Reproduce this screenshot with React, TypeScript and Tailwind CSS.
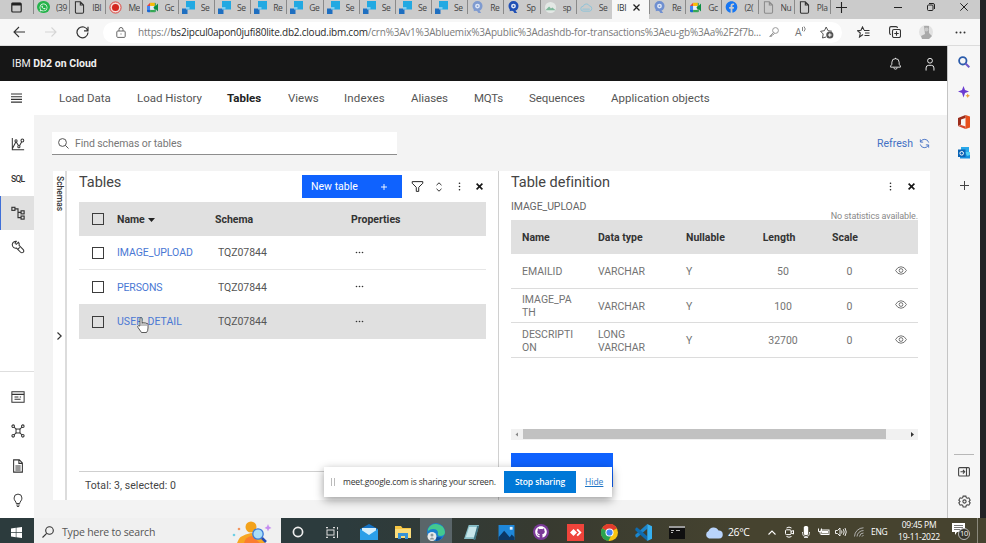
import React from "react";
import type { ReactNode } from "react";
import { FaFacebook, FaGithub, FaWhatsapp } from "react-icons/fa";

type P = { className?: string; children?: ReactNode; box?: string; w?: number };

const Ico = ({ className = "", children, box = "0 0 32 32", w = 2 }: P) => (
  <svg viewBox={box} className={"shrink-0 " + className} fill="none" stroke="currentColor" strokeWidth={w}>
    {children}
  </svg>
);

/* ---------- favicons ---------- */
const Doc = ({ faded }: { faded?: boolean }) => (
  <Ico className={faded ? "h-[13px] w-[13px] text-[#8c8c8c]" : "h-[13px] w-[13px] text-[#333]"} box="0 0 16 16" w={1.3}>
    <path d="M3 1h6l4 4v8.500a1.500 1.500 0 0 1-1.500 1.500h-7A1.500 1.500 0 0 1 3 13.500zM9 1v4h4" />
  </Ico>
);
const Meet = () => (
  <svg viewBox="0 0 16 14" className="h-[11px] w-[13px] shrink-0">
    <path d="M1 5l4-4v4z" fill="#ea4335" />
    <path d="M5 1h6v4H5z" fill="#fbbc04" />
    <path d="M1 5h4v5H1z" fill="#4285f4" />
    <path d="M1 10h4v3H2.500Q1 13 1 11.500z" fill="#1967d2" />
    <path d="M5 10h6v3H5z" fill="#34a853" />
    <path d="M11 1q1 0 1 1v10q0 1-1 1V9.500L9 7l2-2zM12 5l3-3v10l-3-3z" fill="#0a8f43" />
    <path d="M5 5h5l-1 2 1 3H5z" fill="#e8eefb" />
  </svg>
);
const Squares = () => (
  <svg viewBox="0 0 13 13" className="mt-px h-[13px] w-[13px] shrink-0">
    <path d="M4 0h9v8.500H4z" fill="#22a9e2" />
    <path d="M0 7.500h5.500V13H0z" fill="#1f6fc0" />
    <path d="M4 6h3.500v2.500H4z" fill="#7fcdf0" />
  </svg>
);
const Rec = () => (
  <svg viewBox="0 0 14 14" className="h-[13px] w-[13px] shrink-0">
    <circle cx="7" cy="7" r="6" fill="#f4dcda" stroke="#d93a33" />
    <circle cx="7" cy="7" r="3.800" fill="#d3261f" />
  </svg>
);
const Quest = ({ c }: { c: string }) => (
  <svg viewBox="0 0 14 14" className="h-[13px] w-[13px] shrink-0">
    <circle cx="7" cy="5.500" r="4" fill="#dfe7f5" stroke={c} strokeWidth="2.800" />
    <path d="M3 9l5 0 3 4H8l-2-3-3 1z" fill={c} />
    <circle cx="7" cy="5.500" r="1" fill={c} />
  </svg>
);
const Mount = () => (
  <svg viewBox="0 0 14 14" className="h-[13px] w-[13px] shrink-0">
    <circle cx="7" cy="7" r="6" fill="#e3e8e5" />
    <path d="M1.500 10l4-4 2 2 1.500-1 3.500 3z" fill="#7fb99c" />
  </svg>
);
const CloudIc = () => (
  <Ico className="h-[13px] w-[13px] text-[#8fc3d8]" box="0 0 16 16" w={1.2}>
    <path d="M4 12.500a3 3 0 0 1 0-6 4 4 0 0 1 7.500-.5 3.300 3.300 0 0 1 .5 6.500zM3 10h9" />
  </Ico>
);
const Wa = () => (
  <span className="flex h-[12px] w-[13px] shrink-0 items-center justify-center rounded-full bg-[#25b34b] text-white">
    <FaWhatsapp className="h-[9px] w-[9px]" />
  </span>
);

type Tab = [ReactNode, string];
const leftTabs: Tab[] = [
  [<Wa />, "(39"],
  [<Doc />, "IBI"],
  [<Rec />, "Me"],
  [<Meet />, "Gc"],
  [<Squares />, "Se"],
  [<Squares />, "Se"],
  [<Squares />, "Re"],
  [<Squares />, "Ge"],
  [<Squares />, "Se"],
  [<Squares />, "Se"],
  [<Squares />, "Se"],
  [<Squares />, "Se"],
  [<Quest c="#7f9bd0" />, "Re"],
  [<Quest c="#1f4fb5" />, "Sp"],
  [<Mount />, "sp"],
  [<CloudIc />, "Se"],
];
const rightTabs: Tab[] = [
  [<Quest c="#6f8fd0" />, "Re"],
  [<Meet />, "Gc"],
  [<FaFacebook className="h-[12px] w-[13px] shrink-0 text-[#1877f2]" />, "(2("],
  [<Doc faded />, "Nu"],
  [<Doc />, "Pla"],
];
const TabItem = ({ t }: { t: Tab }) => (
  <div className="flex h-[14px] w-[36.2px] shrink-0 items-center border-l border-[#8a8a8a] pl-[3px]">
    {t[0]}
    <span className="ml-[6px] w-[12px] overflow-hidden font-['Open_Sans',sans-serif] text-[8.5px] leading-[15px] tracking-[-0.4px] whitespace-nowrap text-[#444]">
      {t[1]}
    </span>
  </div>
);

const TabStrip = () => (
  <div className="flex h-[19px] shrink-0 items-start bg-[#cbcbcb]">
    <div className="flex h-[14px] w-[33px] shrink-0 items-center pl-[11px]">
      <Ico className="h-[11px] w-[11px] text-[#222]" box="0 0 11 11" w={1.2}>
        <rect x="0.800" y="1" width="9.400" height="9" rx="1" />
        <path d="M1 2.200h9" strokeWidth="2.600" />
      </Ico>
    </div>
    {leftTabs.map((t, i) => (
      <TabItem key={i} t={t} />
    ))}
    <div className="flex h-[19px] w-[37px] shrink-0 items-start bg-[#f7f7f7] pl-[5px] font-['Open_Sans',sans-serif]">
      <span className="w-[12px] overflow-hidden text-[8.5px] leading-[15px] tracking-[-0.3px] text-[#333]">IBI</span>
      <Ico className="mt-[4px] ml-[4px] h-[7px] w-[7px] text-[#222]" box="0 0 7 7" w={1.3}>
        <path d="M.5.5l6 6M6.500.5l-6 6" />
      </Ico>
    </div>
    {rightTabs.map((t, i) => (
      <TabItem key={i} t={t} />
    ))}
    <div className="flex h-[14px] flex-1 items-center border-l border-[#8a8a8a] text-[#222]">
      <Ico className="ml-[5px] h-[11px] w-[11px]" box="0 0 11 11" w={1.1}>
        <path d="M5.500 0v11M0 5.500h11" />
      </Ico>
      <Ico className="ml-[47px] h-[8px] w-[8px]" box="0 0 8 8" w={1}>
        <path d="M0 4.500h8" />
      </Ico>
      <Ico className="ml-[25px] h-[8px] w-[8px]" box="0 0 8 8" w={1}>
        <rect x=".5" y="2" width="5.500" height="5.500" rx="1" />
        <path d="M2 .5h4a1.500 1.500 0 0 1 1.500 1.500v4" />
      </Ico>
      <Ico className="ml-[25px] h-[8px] w-[8px]" box="0 0 8 8" w={1}>
        <path d="M.3.3l7.400 7.400M7.700.3L.3 7.700" />
      </Ico>
    </div>
  </div>
);

const Toolbar = () => (
  <div className="flex h-[27px] shrink-0 items-center border-b border-[#dcdcdc] bg-[#f7f7f7] text-[#333]">
    <Ico className="ml-[13px] h-[12px] w-[12px]" box="0 0 12 12" w={1.1}>
      <path d="M12 6H1M6 1L1 6l5 5" />
    </Ico>
    <Ico className="ml-[20px] h-[12px] w-[12px] text-[#d5d5d5]" box="0 0 12 12" w={1.1}>
      <path d="M0 6h11M6.500 1.500L11 6l-4.500 4.500" />
    </Ico>
    <Ico className="ml-[19px] h-[13px] w-[13px]" box="0 0 13 13" w={1.2}>
      <path d="M11.700 4.500A5.500 5.500 0 1 0 12 6.500M12 .8v4H8" />
    </Ico>
    <div className="ml-[14px] flex h-[21px] w-[739px] items-center rounded-full bg-white pr-[8px] pl-[13px]">
      <Ico className="h-[11px] w-[10px] text-[#666]" box="0 0 10 11" w={1}>
        <rect x=".8" y="4" width="8.400" height="6.400" rx="1" />
        <path d="M3 4V2.500a2 2 0 0 1 4 0V4M5 6.500v1" />
      </Ico>
      <span className="ml-[12px] w-[626px] shrink-0 pt-[1px] font-['Open_Sans',sans-serif] text-[10px] tracking-[-0.210px] whitespace-nowrap text-[#7a7a7a]">
        https://<span className="text-[#2a2a2a]">bs2ipcul0apon0jufi80lite.db2.cloud.ibm.com</span>
        /crn%3Av1%3Abluemix%3Apublic%3Adashdb-for-transactions%3Aeu-gb%3Aa%2F2f7b...
      </span>
      <Ico className="ml-[5px] h-[10px] w-[10px] text-[#999]" box="0 0 10 10" w={1}>
        <circle cx="6.500" cy="3.500" r="2.900" />
        <path d="M4.500 5.500L.6 9.400h2V8h1.400L5.500 6.300" />
      </Ico>
      <span className="ml-[16px] font-['Open_Sans',sans-serif] text-[10.5px] leading-none text-[#777]">A</span>
      <Ico className="mb-[6px] h-[6px] w-[5px] text-[#777]" box="0 0 5 6" w={0.9}>
        <path d="M.5 1v4M2 .5q2.500 2.500 0 5" />
      </Ico>
      <Ico className="ml-[13px] h-[13px] w-[14px] text-[#555]" box="0 0 14 13" w={1}>
        <path d="M6 11L2.500 12l.7-4L.6 5.300l3.800-.6L6.200 1 8 4.700l3.800.5" />
        <circle cx="9.800" cy="9" r="3.600" fill="#555" stroke="none" />
        <path d="M8 9h3.600M9.800 7.200v3.600" stroke="#fff" />
      </Ico>
    </div>
    <Ico className="ml-[15px] h-[12px] w-[13px]" box="0 0 13 12" w={1.1}>
      <path d="M7 4.500h5.500M8 7h4.500M7.500 9.500h5M6 8.500L2.500 11l.8-4L.6 4.700l3.400-.5L5.500 1 7 4" />
    </Ico>
    <Ico className="ml-[19px] h-[12px] w-[12px]" box="0 0 12 12" w={1.1}>
      <rect x="3.500" y="3.500" width="8" height="8" rx="1.500" />
      <path d="M7.500 5.300v4.400M5.300 7.500h4.400M2 8.500A1.500 1.500 0 0 1 .6 7V2A1.500 1.500 0 0 1 2 .6h5A1.500 1.500 0 0 1 8.500 2" />
    </Ico>
    <svg viewBox="0 0 14 14" className="ml-[18px] h-[14px] w-[14px] shrink-0">
      <circle cx="7" cy="7" r="7" fill="#e2e2e2" />
      <path d="M5 1h5v7l3 3-3 3H3l-1-3 4-2z" fill="#a9a9a9" />
      <circle cx="7.500" cy="4.500" r="2" fill="#c9c9c9" />
    </svg>
    <svg viewBox="0 0 11 3" className="ml-[22px] h-[3px] w-[11px] shrink-0" fill="#333">
      <circle cx="1.500" cy="1.500" r="1" />
      <circle cx="5.500" cy="1.500" r="1" />
      <circle cx="9.500" cy="1.500" r="1" />
    </svg>
  </div>
);

/* ---------- left rail ---------- */
const Rail = () => (
  <div className="flex w-[34px] shrink-0 flex-col bg-white text-[#333]">
    <div className="flex h-[34px] items-center pl-[11px]">
      <Ico className="h-[10px] w-[11px]" box="0 0 11 10" w={1.1}>
        <path d="M0 1h11M0 3.700h11M0 6.400h11M0 9.100h11" />
      </Ico>
    </div>
    <div className="mt-[12px] flex h-[34px] items-center pl-[11px]">
      <Ico className="h-[14px] w-[14px]" w={2.3}>
        <path d="M3 2v27h27M3 27l8-15.500M12 11.500l5 8M19.500 20l5-9" />
        <circle cx="11.500" cy="9" r="2.500" />
        <circle cx="18" cy="22" r="2.500" />
        <circle cx="26" cy="8" r="3.200" />
      </Ico>
    </div>
    <div className="flex h-[35px] items-center pt-[1px] pl-[11px] font-['Roboto',sans-serif] text-[8.5px] font-medium tracking-[-0.7px]">SQL</div>
    <div className="flex h-[34px] items-center border-l-[1.500px] border-[#3f6fd8] bg-[#e0e0e0] pl-[10px]">
      <Ico className="h-[14px] w-[14px]" w={2.6}>
        <rect x="2" y="3" width="7" height="7" />
        <rect x="23" y="11" width="7" height="7" />
        <rect x="23" y="23" width="7" height="7" />
        <path d="M9 6.500h7v20h7M16 14.500h7" />
      </Ico>
    </div>
    <div className="flex h-[34px] items-center pl-[11px]">
      <Ico className="h-[14px] w-[14px]" w={2.4}>
        <path d="M12 3a8 8 0 0 0-8.500 11 8 8 0 0 0 9 4.500l9.500 9.500a4 4 0 0 0 6-6L18.500 12.500A8 8 0 0 0 17 5l-5 5-3-3zM20 17l-4 4" />
      </Ico>
    </div>
    <div className="mt-[106.500px] border-t border-[#dedede]" />
    <div className="mt-[8.500px] flex h-[34px] items-center pl-[11px]">
      <Ico className="h-[14px] w-[14px]" w={2.3}>
        <rect x="2" y="4" width="28" height="24" />
        <path d="M2 10h28M8 16h9M8 21h14M20 16h3" />
      </Ico>
    </div>
    <div className="flex h-[34px] items-center pl-[11px]">
      <Ico className="h-[14px] w-[14px]" w={2.3}>
        <rect x="11.500" y="11.500" width="9" height="9" />
        <circle cx="5" cy="5" r="3" />
        <circle cx="27" cy="5" r="3" />
        <circle cx="5" cy="27" r="3" />
        <circle cx="27" cy="27" r="3" />
        <path d="M7 7l5 5M25 7l-5 5M7 25l5-5M25 25l-5-5" />
      </Ico>
    </div>
    <div className="flex h-[35px] items-center pl-[11px]">
      <Ico className="h-[14px] w-[14px]" w={2.4}>
        <path d="M6 2h13l7 7v21H6zM18 2v8h8M10 16h12M10 20.500h12M10 25h12" />
      </Ico>
    </div>
    <div className="flex h-[34px] items-center pl-[11px]">
      <Ico className="h-[14px] w-[14px]" w={2.2}>
        <path d="M12 24c0-5-5-6-5-12.500a9 9 0 0 1 18 0C25 18 20 19 20 24zM12 27.500h8M13.500 31h5" />
      </Ico>
    </div>
  </div>
);

const Dots3 = () => (
  <svg viewBox="0 0 3 11" className="h-[9px] w-[3px] shrink-0" fill="#222">
    <circle cx="1.500" cy="1.500" r="1" />
    <circle cx="1.500" cy="5.500" r="1" />
    <circle cx="1.500" cy="9.500" r="1" />
  </svg>
);
const Cross = () => (
  <Ico className="h-[7px] w-[7px] text-[#161616]" box="0 0 7 7" w={1.6}>
    <path d="M.6.6l5.800 5.800M6.400.6L.6 6.400" />
  </Ico>
);
const Check = () => <span className="h-[12px] w-[12px] shrink-0 border border-[#3c3c3c]" />;

const rows = [
  { n: "IMAGE_UPLOAD", cls: "h-[34px] border-b border-[#e6e6e6]", w: "tracking-[-0.050px]" },
  { n: "PERSONS", cls: "h-[34px]", w: "tracking-[-0.120px]" },
  { n: "USER_DETAIL", cls: "h-[35px] bg-[#e0e0e0]", w: "tracking-[0.050px]" },
];

const TablesPanel = () => (
  <div className="flex w-[432px] shrink-0 flex-col border-r border-[#d0d0d0] pr-[12px] pl-[12px]">
    <div className="flex h-[31px] items-start">
      <h2 className="pt-[2px] text-[14.5px] leading-[20px] tracking-[-0.050px] text-[#444]">Tables</h2>
      <div className="mt-[4px] ml-auto flex h-[23px] items-center">
        <button className="flex h-[23px] w-[100px] items-center bg-[#0f62fe] pl-[9px] text-[10.5px] tracking-[0.020px] text-white">
          New table
          <Ico className="ml-[23px] h-[6px] w-[6px]" box="0 0 6 6" w={0.9}>
            <path d="M3 0v6M0 3h6" />
          </Ico>
        </button>
        <Ico className="ml-[9px] h-[13px] w-[13px] text-[#222]" w={2.4}>
          <path d="M3 4h26v4L19 18v10h-6V18L3 8z" />
        </Ico>
        <Ico className="ml-[11px] h-[10px] w-[8px] text-[#333]" box="0 0 8 10" w={1}>
          <path d="M1.500 3.200L4 .8l2.500 2.400M1.500 6.800L4 9.200l2.500-2.400" />
        </Ico>
        <span className="ml-[15px] flex">
          <Dots3 />
        </span>
        <span className="mr-[3px] ml-[15px] flex">
          <Cross />
        </span>
      </div>
    </div>
    <div className="flex h-[34px] items-center bg-[#e0e0e0] pl-[13px] text-[10.5px] font-bold text-[#333]">
      <Check />
      <span className="ml-[13px] flex w-[98px] items-center pt-[2px]">
        Name
        <svg viewBox="0 0 7 4" className="ml-[3px] h-[4px] w-[7px]">
          <path d="M0 0h7L3.500 4z" fill="#222" />
        </svg>
      </span>
      <span className="w-[136px] pt-px">Schema</span>
      <span className="pt-px">Properties</span>
    </div>
    {rows.map((r) => (
      <div key={r.n} className={"flex items-center pl-[13px] text-[10.5px] text-[#555] " + r.cls}>
        <Check />
        <span className={"ml-[13px] w-[101px] pt-px text-[#4a78d4] " + r.w}>{r.n}</span>
        <span className="w-[137px] pt-px tracking-[-0.050px]">TQZ07844</span>
        <svg viewBox="0 0 9 3" className="mb-[1px] h-[3px] w-[9px]" fill="#333">
          <circle cx="1.500" cy="1.500" r=".8" />
          <circle cx="4.500" cy="1.500" r=".8" />
          <circle cx="7.500" cy="1.500" r=".8" />
        </svg>
      </div>
    ))}
    <div className="mt-auto flex h-[29px] items-center border-t border-[#cfcfcf] pl-[6px] text-[10.5px] tracking-[0.060px] text-[#444]">
      Total: 3, selected: 0
    </div>
  </div>
);

const defs = [
  { n: ["EMAILID"], t: ["VARCHAR"], l: "50" },
  { n: ["IMAGE_PA", "TH"], t: ["VARCHAR"], l: "100" },
  { n: ["DESCRIPTI", "ON"], t: ["LONG", "VARCHAR"], l: "32700" },
];
const Lines = ({ v }: { v: string[] }) => (
  <>
    {v.map((x) => (
      <span key={x} className="block">
        {x}
      </span>
    ))}
  </>
);

const Definition = () => (
  <div className="flex flex-1 flex-col pr-[12px] pl-[12px]">
    <div className="flex h-[31px] items-start">
      <h2 className="pt-[2px] text-[14.5px] leading-[20px] tracking-[-0.020px] text-[#444]">Table definition</h2>
      <div className="mt-[4px] mr-[3px] ml-auto flex h-[23px] items-center">
        <Dots3 />
        <span className="ml-[16px] flex">
          <Cross />
        </span>
      </div>
    </div>
    <div className="flex h-[18px] justify-between overflow-hidden text-[10.5px] text-[#666]">
      <span className="leading-[10px] tracking-[-0.100px]">IMAGE_UPLOAD</span>
      <span className="pt-[8px] text-[9px] leading-[12px] tracking-[-0.130px] text-[#888]">No statistics available.</span>
    </div>
    <div className="flex h-[34px] items-center bg-[#e0e0e0] pt-[2px] text-[10.5px] font-bold text-[#333]">
      <span className="w-[87px] pl-[11px]">Name</span>
      <span className="w-[88px]">Data type</span>
      <span className="w-[66px]">Nullable</span>
      <span className="w-[54px] text-center">Length</span>
      <span className="w-[78px] text-center">Scale</span>
    </div>
    {defs.map((d) => (
      <div key={d.l} className="flex h-[34.600px] items-center border-b border-[#dcdcdc] pt-[2px] text-[10.5px] leading-[13px] text-[#737373]">
        <span className="w-[87px] pl-[11px]">
          <Lines v={d.n} />
        </span>
        <span className="w-[88px] tracking-[-0.050px]">
          <Lines v={d.t} />
        </span>
        <span className="w-[66px]">Y</span>
        <span className="w-[62px] text-center">{d.l}</span>
        <span className="w-[71px] text-center">0</span>
        <Ico className="mb-[3px] ml-[9.500px] h-[11px] w-[12px] text-[#666]" box="0 0 32 28" w={2.4}>
          <path d="M1.500 14Q7 4 16 4t14.500 10Q25 24 16 24T1.500 14z" />
          <circle cx="16" cy="14" r="5" />
        </Ico>
      </div>
    ))}
    <div className="mt-[71px] flex h-[11px] items-center justify-between bg-[#f1f1f1]">
      <svg viewBox="0 0 12 11" className="h-[11px] w-[12px]">
        <path d="M7 3.500v4L4.500 5.500z" fill="#888" />
      </svg>
      <span className="mr-auto h-[10px] w-[363px] bg-[#c1c1c1]" />
      <svg viewBox="0 0 12 11" className="h-[11px] w-[12px]">
        <path d="M5 3v5L8 5.500z" fill="#333" />
      </svg>
    </div>
    <div className="mt-[13px] h-[34px] w-[102px] bg-[#0f62fe]" />
  </div>
);

/* ---------- browser sidebar ---------- */
const EdgeBar = () => (
  <div className="flex w-[33px] shrink-0 flex-col items-center border-l border-[#c4c4c4] bg-[#f6f6f6] text-[#444]">
    <svg viewBox="0 0 12 12" className="mt-[10px] h-[12px] w-[12px]" fill="none">
      <circle cx="4.800" cy="4.800" r="3.700" stroke="#2c5cab" strokeWidth="1.800" />
      <path d="M7.500 7.500l3.800 3.800" stroke="#6d59c8" strokeWidth="2" />
    </svg>
    <svg viewBox="0 0 12 12" className="mt-[18px] h-[12px] w-[12px]">
      <path d="M5.500 0l1.500 4 4 1.500-4 1.500-1.500 4.500L4 7 0 5.500 4 4z" fill="#6a3bd0" />
      <path d="M9.700 7.500l.8 1.500 1.500.8-1.500.7-.8 1.500-.7-1.500-1.500-.7L9 9z" fill="#e9a23b" />
    </svg>
    <svg viewBox="0 0 12 14" className="mt-[17px] h-[14px] w-[12px]">
      <path d="M7.500 0L12 1.500v11L7.500 14z" fill="#e8501c" />
      <path d="M7.500 0L0 3v8l3-1.500V4.500L7.500 3z" fill="#9c2d1c" />
      <path d="M0 11l7.500 3v-2.500L3 10z" fill="#d6452a" />
    </svg>
    <svg viewBox="0 0 12 12" className="mt-[18px] h-[12px] w-[12px]">
      <path d="M3 0h8v6H3z" fill="#28a8ea" />
      <path d="M2 5h10v6.500H2z" fill="#1490df" />
      <path d="M7 5h5v3l-3 1z" fill="#50d0f5" />
      <path d="M0 2.500h7.500V10H0z" fill="#0a64b5" />
      <circle cx="3.700" cy="6.300" r="1.800" fill="none" stroke="#fff" />
    </svg>
    <Ico className="mt-[22px] h-[9px] w-[9px]" box="0 0 9 9" w={1}>
      <path d="M4.500 0v9M0 4.500h9" />
    </Ico>
    <div className="mt-[264px] w-[20px] border-t border-[#b8b8b8]" />
    <Ico className="mt-[12px] h-[10px] w-[12px]" box="0 0 12 10" w={1.1}>
      <rect x=".6" y=".6" width="10.800" height="8.400" rx="1" />
      <path d="M8.500 1v8M2.500 4.800h4M5 3l1.700 1.800L5 6.600" />
    </Ico>
    <Ico className="mt-[18px] h-[13px] w-[13px]" box="0 0 24 24" w={2}>
      <path d="M9.500 2h5l.8 3 1.700 1 3-.8 2.500 4.300-2.200 2.500 2.200 2.500L20 18.800l-3-.8-1.700 1-.8 3h-5l-.8-3L7 18l-3 .8-2.500-4.300L3.700 12 1.500 9.500 4 5.200 7 6l1.700-1z" />
      <circle cx="12" cy="12" r="3" />
    </Ico>
  </div>
);

/* ---------- taskbar ---------- */
const Taskbar = () => (
  <div className="flex h-[25px] shrink-0 items-center bg-linear-to-r from-[#2c3b3d] from-35% via-[#373a30] via-55% to-[#46432f] to-75% font-['Open_Sans',sans-serif] text-white">
    <div className="flex h-[25px] w-[34px] shrink-0 items-center pl-[11px]">
      <svg viewBox="0 0 11 11" className="mt-[3px] h-[11px] w-[11px]" fill="#fff">
        <path d="M0 1.500l4.800-.7v4.500H0zM5.400.7L11 0v5.300H5.400zM0 5.900h4.800v4.400L0 9.600zM5.400 5.900H11V11l-5.600-.7z" />
      </svg>
    </div>
    <div className="flex h-[25px] w-[247px] shrink-0 items-center bg-[#f0f0f0] pt-[3px] pl-[8px] text-[#555]">
      <Ico className="h-[12px] w-[12px] text-[#333]" box="0 0 12 12" w={1.1}>
        <circle cx="7.500" cy="4.500" r="3.800" />
        <path d="M4.700 7.300L.5 11.500" />
      </Ico>
      <span className="ml-[8px] w-[170px] pt-px text-[10.5px] tracking-[-0.180px]">Type here to search</span>
      <svg viewBox="0 0 40 22" className="h-[22px] w-[40px]">
        <circle cx="19" cy="6" r="5.500" fill="#f3a21b" />
        <path d="M5 22q2-8 14-10 13 2 14 10z" fill="#f7a623" />
        <path d="M12 22q1-6 8-7l8 7z" fill="#fb7d2f" />
        <circle cx="26" cy="13" r="5.200" fill="#a8ddf8" stroke="#3a78d8" strokeWidth="1.300" />
        <path d="M30 17l4 4" stroke="#234db5" strokeWidth="2.500" />
        <path d="M36 3l1 2.500L39.500 7 37 8l-1 2.500L35 8l-2.500-1L35 5.500z" fill="#c58cf0" />
        <circle cx="7" cy="8" r="1.300" fill="#f3965f" />
        <circle cx="2" cy="14" r="1.300" fill="#6fd0e6" />
      </svg>
    </div>
    <div className="flex h-[25px] w-[139px] shrink-0 items-center pt-[3px]">
      <svg viewBox="0 0 12 12" className="ml-[11px] h-[12px] w-[12px]">
        <circle cx="6" cy="6" r="4.600" fill="none" stroke="#eee" strokeWidth="1.700" />
      </svg>
      <Ico className="ml-[22px] h-[11px] w-[13px] text-[#ddd]" box="0 0 13 11" w={1}>
        <rect x="1" y="3" width="7" height="5" />
        <path d="M0 .5h2M7 .5h2M0 10.500h2M7 10.500h2M1 0v1.500M8 0v1.500M1 9.500V11M8 9.500V11M11.500 0v2.500M11.500 4v7" />
      </Ico>
      <svg viewBox="0 0 18 16" className="ml-[21px] h-[16px] w-[18px]">
        <path d="M0 5l9-5 9 5v11H0z" fill="#1572c4" />
        <path d="M2 4h14v5l-7 3-7-3z" fill="#d5effc" />
        <path d="M0 5l9 6 9-6v11H0z" fill="#2b9fe8" />
      </svg>
      <svg viewBox="0 0 16 14" className="ml-[17px] h-[14px] w-[16px]">
        <path d="M0 1h6l1.500 2H16v10H0z" fill="#f6c643" />
        <path d="M0 4h16v9H0z" fill="#fbdc7a" />
        <path d="M3 8h10v6h-3v-3H6v3H3z" fill="#3792d6" />
      </svg>
    </div>
    <div className="flex h-[25px] w-[32px] shrink-0 items-center justify-center bg-[#5a6569] pt-[3px]">
      <svg viewBox="0 0 18 18" className="h-[18px] w-[18px]">
        <circle cx="9" cy="9" r="9" fill="#1b7fd0" />
        <path d="M1 6a9 9 0 0 1 17 3q0 4-5 4-3 0-2-3 0-4-5-4-3 0-5 2z" fill="#44c98f" />
        <path d="M8 10q0 5 7 4.500a9 9 0 0 1-6 3.500Z" fill="#0d4f9d" />
        <circle cx="5" cy="13.500" r="4.500" fill="#e6e9ea" />
        <circle cx="5" cy="12" r="1.500" fill="#8d979b" />
        <path d="M2.500 16.500q2.500-4 5 0z" fill="#8d979b" />
      </svg>
    </div>
    <div className="flex h-[25px] flex-1 items-center pt-[3px]">
      <svg viewBox="0 0 16 16" className="ml-[12px] h-[15px] w-[15px]">
        <path d="M5 0h11l-4 15H0z" fill="#87bdc6" />
        <path d="M5.500 2h9L11 13H2z" fill="#c7e6ea" />
        <path d="M14 1h2l-4 15h-2z" fill="#3f7380" />
      </svg>
      <svg viewBox="0 0 17 16" className="ml-[19px] h-[15px] w-[17px]">
        <path d="M0 0h17v16H0z" fill="#1e87d9" />
        <path d="M0 13l6-7 6 7 2-3 3 3v3H0z" fill="#0b3765" />
        <path d="M12 2h3v3h-3z" fill="#dff2ff" />
      </svg>
      <span className="ml-[18px] flex h-[16px] w-[16px] items-center justify-center rounded-full bg-[#7b3a98]">
        <FaGithub className="h-[12px] w-[12px]" />
      </span>
      <svg viewBox="0 0 17 17" className="ml-[18px] h-[17px] w-[17px]">
        <path d="M0 0h17v17H0z" fill="#ef443b" />
        <path d="M6.500 5L10 8.500 6.500 12 3 8.500z" fill="#fff" />
        <path d="M9.500 6l1.300-1.300 3.800 3.800-3.800 3.800L9.500 11 12 8.500z" fill="#fff" />
      </svg>
      <svg viewBox="0 0 16 16" className="ml-[17px] h-[17px] w-[17px]">
        <circle cx="8" cy="8" r="8" fill="#f9c513" />
        <path d="M8 8L1 4a8 8 0 0 1 14 0z" fill="#e23b2e" />
        <path d="M8 8l-7-4a8 8 0 0 0 6 12l3-6z" fill="#2aa34e" />
        <circle cx="8" cy="8" r="3.800" fill="#fff" />
        <circle cx="8" cy="8" r="2.900" fill="#4285f4" />
      </svg>
      <svg viewBox="0 0 18 18" className="ml-[17px] h-[17px] w-[17px]">
        <path d="M13 0v5L2 14.500.3 13v-1.500z" fill="#1c86cc" />
        <path d="M.3 5L2 3.500 13 13v5L.3 6.500z" fill="#0f6cb0" />
        <path d="M13 0l5 2.500v13L13 18z" fill="#35b0f1" />
      </svg>
      <svg viewBox="0 0 16 13" className="ml-[17px] h-[13px] w-[16px]">
        <path d="M0 0h16v13H0z" fill="#101010" />
        <path d="M0 0h16v2H0z" fill="#9a9a9a" />
        <path d="M2 4.500h3M7 4.500h4M2 6.500h2" stroke="#bbb" />
      </svg>
      <svg viewBox="0 0 18 13" className="ml-[20px] h-[13px] w-[18px]">
        <path d="M4 12.500a4 4 0 0 1-.5-7.500 5.500 5.500 0 0 1 10-.5 4 4 0 0 1 .5 8z" fill="#b9d4fb" />
      </svg>
      <span className="ml-[5px] w-[24px] pt-px text-[10.500px] tracking-[-0.400px] whitespace-nowrap">26°C</span>
      <Ico className="ml-[16px] h-[5px] w-[8px]" box="0 0 8 5" w={1.1}>
        <path d="M.5 4.500L4 1l3.500 3.500" />
      </Ico>
      <Ico className="ml-[9px] h-[12px] w-[9px]" box="0 0 9 12" w={1}>
        <path d="M1.500 2Q4 .2 6.500 2M1.500 10.500q2.500 1.500 5 0" />
        <rect x=".5" y="3.800" width="5.500" height="4.800" rx="1" />
        <path d="M6 5.500l2.500-1v3.500L6 7" />
      </Ico>
      <svg viewBox="0 0 8 12" className="ml-[8px] h-[12px] w-[8px]">
        <rect x="1.800" y="0" width="4.400" height="9" rx="1.500" fill="#fff" />
        <path d="M.5 6v1.500a3.500 3 0 0 0 7 0V6M4 10v2M2 11.500h4" fill="none" stroke="#ddd" />
      </svg>
      <Ico className="ml-[8px] h-[8px] w-[12px]" box="0 0 12 8" w={1}>
        <rect x="3" y="2" width="8" height="4.500" />
        <path d="M4 4.200h6" strokeWidth="2.500" />
        <path d="M.5.5v3h3v-3M2 3.500v2" />
      </Ico>
      <Ico className="ml-[5px] h-[10px] w-[12px]" box="0 0 12 10" w={0.9}>
        <path d="M.5 3.500h2L5 1v8L2.500 6.500h-2zM6.500 3.500q1 1.500 0 3M8.300 2.200q1.800 2.800 0 5.600M10 1q2.500 4 0 8" />
      </Ico>
      <Ico className="ml-[7px] h-[10px] w-[10px] text-[#bbb]" box="0 0 10 10" w={0.9}>
        <path d="M.5 9.500A9 9 0 0 1 9.500.8M3 9.500a6.500 6.500 0 0 1 6.500-6M5.500 9.500a4 4 0 0 1 4-3.500M8 9.500a1.500 1.500 0 0 1 1.500-1" />
      </Ico>
      <span className="ml-[7px] w-[17px] pt-px text-[8.500px] tracking-[-0.300px]">ENG</span>
      <span className="-mt-[2px] ml-[7px] w-[48px] text-center text-[8.500px] leading-[12.500px] tracking-[-0.250px] whitespace-nowrap">
        09:45 PM
        <br />
        19-11-2022
      </span>
      <span className="relative ml-[9px] block h-[18px] w-[17px] shrink-0">
        <svg viewBox="0 0 13 12" className="h-[12px] w-[13px]">
          <path d="M0 0h13v9H5l-2 3V9H0z" fill="#fff" />
          <path d="M2 2.500h9M2 4.500h9M2 6.500h6" stroke="#555" strokeWidth=".8" />
        </svg>
        <span className="absolute top-[5px] left-[6px] flex h-[12px] w-[12px] items-center justify-center rounded-full border border-[#bbb] bg-[#35342b] text-[7.500px] leading-none tracking-[-0.300px]">
          10
        </span>
      </span>
    </div>
    <div className="h-[25px] w-[9px] shrink-0 border-l border-[#8b897c]" />
  </div>
);

const ShareBar = () => (
  <div className="absolute top-[467px] left-[324px] flex h-[30px] w-[288px] items-center bg-white font-['Open_Sans',sans-serif] text-[8.5px] text-[#333] shadow-[0_3px_9px_rgba(0,0,0,0.4)]">
    <span className="ml-[7px] h-[8px] w-[4px] shrink-0 border-x border-[#bbb]" />
    <span className="ml-[8px] w-[161px] shrink-0 tracking-[-0.170px] whitespace-nowrap">meet.google.com is sharing your screen.</span>
    <span className="flex h-[22px] w-[72px] shrink-0 items-center justify-center bg-[#0078d7] font-semibold tracking-[-0.100px] whitespace-nowrap text-white">Stop sharing</span>
    <span className="ml-[9px] text-[#1f74c4] underline">Hide</span>
  </div>
);

const nav = [
  { t: "Load Data", c: "w-[78px] tracking-[-0.050px]" },
  { t: "Load History", c: "w-[90px] tracking-[0px]" },
  { t: "Tables", c: "w-[61px] font-bold text-[#222]" },
  { t: "Views", c: "w-[56px]" },
  { t: "Indexes", c: "w-[67px] tracking-[0.150px]" },
  { t: "Aliases", c: "w-[63px] tracking-[-0.050px]" },
  { t: "MQTs", c: "w-[55px] tracking-[-0.200px]" },
  { t: "Sequences", c: "w-[82px] tracking-[-0.050px]" },
  { t: "Application objects", c: "w-[110px] tracking-[0.030px]" },
];

export default function App() {
  return (
    <div className="relative flex h-[543px] w-[986px] flex-col overflow-hidden bg-[#222326] font-['Roboto',sans-serif]">
      <div className="flex h-[518px] w-[980px] shrink-0 flex-col">
        <TabStrip />
        <Toolbar />
        <div className="flex h-[472px] shrink-0">
          <div className="flex w-[947px] shrink-0 flex-col">
            <header className="flex h-[35px] shrink-0 items-center bg-[#161616] pl-[12px] text-[10.500px] text-[#f0f0f0]">
              <span className="pt-px tracking-[0.030px]">
                IBM <b>Db2 on Cloud</b>
              </span>
              <Ico className="ml-auto h-[13px] w-[13px]" w={2.2}>
                <path d="M16 2v3M4 25v-3l3-4v-5a9 9 0 0 1 18 0v5l3 4v3zM12 26a4 4 0 0 0 8 0" />
              </Ico>
              <Ico className="mr-[10px] ml-[21px] h-[14px] w-[14px]" w={2.2}>
                <circle cx="16" cy="8.500" r="5.500" />
                <path d="M7 31v-6a6 6 0 0 1 6-6h6a6 6 0 0 1 6 6v6" />
              </Ico>
            </header>
            <div className="flex h-[437px]">
              <Rail />
              <div className="flex w-[913px] flex-col bg-[#f3f3f3]">
                <nav className="flex h-[34px] shrink-0 items-center bg-white pt-px pl-[25px] text-[11.5px] whitespace-nowrap text-[#555]">
                  {nav.map((n) => (
                    <span key={n.t} className={"shrink-0 " + n.c}>
                      {n.t}
                    </span>
                  ))}
                </nav>
                <div className="mt-[17px] flex h-[23px] items-center pr-[17px] pl-[18px] text-[10.500px]">
                  <div className="flex h-[23px] w-[345px] items-center border-b border-[#8d8d8d] bg-white pl-[6px] text-[#777]">
                    <Ico className="h-[11px] w-[11px] text-[#555]" box="0 0 11 11" w={1}>
                      <circle cx="4.500" cy="4.500" r="3.900" />
                      <path d="M7.300 7.300l3.200 3.200" />
                    </Ico>
                    <span className="ml-[6px] pt-px tracking-[-0.080px]">Find schemas or tables</span>
                  </div>
                  <span className="ml-auto pt-px text-[#4470c4]">Refresh</span>
                  <Ico className="ml-[6px] h-[11px] w-[11px] text-[#4470c4]" box="0 0 12 12" w={1}>
                    <path d="M1.500 1.500v3h3M10.500 10.500v-3h-3M1.700 4.300A4.700 4.700 0 0 1 10.600 5M10.300 7.700A4.700 4.700 0 0 1 1.400 7" />
                  </Ico>
                </div>
                <div className="mt-[16px] ml-[19px] flex h-[329px] w-[877px] bg-white">
                  <div className="flex w-[14px] shrink-0 flex-col items-center justify-between border-r-2 border-[#dcdcdc] pt-[5px] pb-[160px] text-[#333]">
                    <span className="text-[8.500px] leading-[13px] font-medium [writing-mode:vertical-rl]">Schemas</span>
                    <Ico className="h-[8px] w-[5px]" box="0 0 5 8" w={1.2}>
                      <path d="M.5.5L4.200 4 .5 7.500" />
                    </Ico>
                  </div>
                  <TablesPanel />
                  <Definition />
                </div>
              </div>
            </div>
          </div>
          <EdgeBar />
        </div>
      </div>
      <Taskbar />
      <ShareBar />
      <svg viewBox="0 0 12 16" className="absolute top-[317px] left-[137px] h-[16px] w-[12px]">
        <path d="M3 9V1.800q0-1.300 1-1.300t1 1.300V6q1-.8 2 0 1-.6 2 .3 2-.3 2 1.500V11q0 3-1.500 4.500h-5L1 10.500q-.8-1.500.3-1.800z" fill="#fff" stroke="#333" strokeWidth=".8" />
        <path d="M5 6v3M7 6.500V9M9 7v2" stroke="#333" strokeWidth=".6" />
      </svg>
    </div>
  );
}
